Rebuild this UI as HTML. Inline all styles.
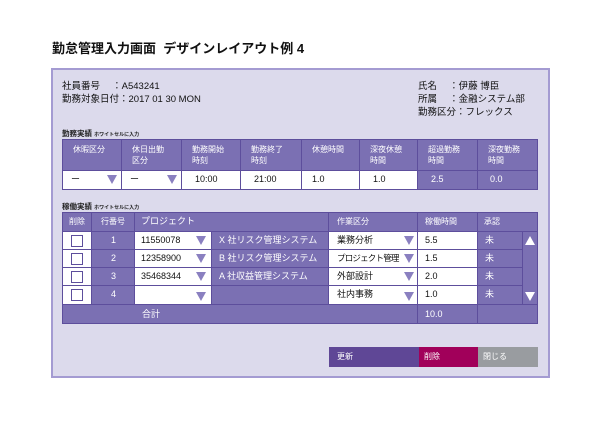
<!DOCTYPE html>
<html><head><meta charset="utf-8"><style>
*{margin:0;padding:0;box-sizing:border-box}
body{width:600px;height:425px;background:#fff;position:relative;font-family:"Liberation Sans","Noto Sans CJK JP",sans-serif;overflow:hidden}
div{position:absolute}
.t{font-size:9.5px;color:#111;white-space:nowrap}
.h{background:#7b70b3;color:#fff;font-size:8px;line-height:11px;border-right:1px solid #5d4e9c;border-bottom:1px solid #5d4e9c;padding-left:10px;padding-top:4px}
.w{background:#fff;border-right:1px solid #5d4e9c;border-bottom:1px solid #5d4e9c;font-size:9px;color:#111;line-height:17px;padding-left:8px;white-space:nowrap}
.p{background:#7b70b3;border-right:1px solid #5d4e9c;border-bottom:1px solid #5d4e9c;font-size:9px;color:#fff;line-height:17px;padding-left:8px;white-space:nowrap}
.a{width:0;height:0;border-left:5px solid transparent;border-right:5px solid transparent;border-top:9px solid #8a80c0;top:4px}
.cb{width:12px;height:12px;border:1px solid #5d4e9c;background:#fff;left:8px;top:3px}
</style></head><body>
<div style="left:52px;top:38px;font-size:13px;font-weight:bold;color:#111">勤怠管理入力画面&nbsp; デザインレイアウト例 4</div>
<div style="left:51px;top:68px;width:499px;height:310px;background:#dcdaec;border:2px solid #a49bd2"></div>
<div class="t" style="left:62px;top:80px;line-height:13px">社員番号　 ：A543241<br>勤務対象日付：2017 01 30 MON</div>
<div class="t" style="left:418px;top:80px;line-height:13px">氏名　 ：伊藤 博臣<br>所属　 ：金融システム部<br>勤務区分：フレックス</div>
<div style="left:62px;top:128px;font-size:7.5px;font-weight:bold;color:#222">勤務実績 <span style="font-size:5px">ホワイトセルに入力</span></div>
<div style="left:62px;top:139px;width:476px;height:51px;border-left:1px solid #5d4e9c;border-top:1px solid #5d4e9c;background:#5d4e9c"></div>
<div class="h" style="left:63px;top:140px;width:59px;height:31px">休暇区分</div>
<div class="h" style="left:122px;top:140px;width:60px;height:31px">休日出勤<br>区分</div>
<div class="h" style="left:182px;top:140px;width:59px;height:31px">勤務開始<br>時刻</div>
<div class="h" style="left:241px;top:140px;width:61px;height:31px">勤務終了<br>時刻</div>
<div class="h" style="left:302px;top:140px;width:58px;height:31px">休憩時間</div>
<div class="h" style="left:360px;top:140px;width:58px;height:31px">深夜休憩<br>時間</div>
<div class="h" style="left:418px;top:140px;width:60px;height:31px">超過勤務<br>時間</div>
<div class="h" style="left:478px;top:140px;width:60px;height:31px">深夜勤務<br>時間</div>
<div class="w" style="left:63px;top:171px;width:59px;height:19px">ー<div class="a" style="left:44px"></div></div>
<div class="w" style="left:122px;top:171px;width:60px;height:19px">ー<div class="a" style="left:45px"></div></div>
<div class="w" style="left:182px;top:171px;width:59px;height:19px;padding-left:13px">10:00</div>
<div class="w" style="left:241px;top:171px;width:61px;height:19px;padding-left:13px">21:00</div>
<div class="w" style="left:302px;top:171px;width:58px;height:19px;padding-left:10px">1.0</div>
<div class="w" style="left:360px;top:171px;width:58px;height:19px;padding-left:13px">1.0</div>
<div class="p" style="left:418px;top:171px;width:60px;height:19px;padding-left:13px">2.5</div>
<div class="p" style="left:478px;top:171px;width:60px;height:19px;padding-left:12px">0.0</div>

<div style="left:62px;top:201px;font-size:7.5px;font-weight:bold;color:#222">稼働実績 <span style="font-size:5px">ホワイトセルに入力</span></div>
<div style="left:62px;top:212px;width:476px;height:112px;border-left:1px solid #5d4e9c;border-top:1px solid #5d4e9c;background:#5d4e9c"></div>
<div class="h" style="left:63px;top:213px;width:29px;height:19px;padding-left:6px;padding-top:3px">削除</div>
<div class="h" style="left:92px;top:213px;width:43px;height:19px;padding-left:9px;padding-top:3px">行番号</div>
<div class="h" style="left:135px;top:213px;width:194px;height:19px;padding-left:6px;padding-top:3px;font-size:9px">プロジェクト</div>
<div class="h" style="left:329px;top:213px;width:89px;height:19px;padding-left:8px;padding-top:3px">作業区分</div>
<div class="h" style="left:418px;top:213px;width:60px;height:19px;padding-left:7px;padding-top:3px">稼働時間</div>
<div class="h" style="left:478px;top:213px;width:60px;height:19px;padding-left:6px;padding-top:3px">承認</div>

<div class="w" style="left:63px;top:232px;width:29px;height:18px"><div class="cb"></div></div>
<div class="p" style="left:92px;top:232px;width:43px;height:18px;padding-left:19px">1</div>
<div class="w" style="left:135px;top:232px;width:77px;height:18px;padding-left:6px">11550078<div class="a" style="left:61px"></div></div>
<div class="p" style="left:212px;top:232px;width:117px;height:18px;padding-left:7px">X 社リスク管理システム</div>
<div class="w" style="left:329px;top:232px;width:89px;height:18px;padding-left:8px">業務分析<div class="a" style="left:75px"></div></div>
<div class="w" style="left:418px;top:232px;width:60px;height:18px;padding-left:7px">5.5</div>
<div class="p" style="left:478px;top:232px;width:45px;height:18px;padding-left:7px">未</div>

<div class="w" style="left:63px;top:250px;width:29px;height:18px"><div class="cb"></div></div>
<div class="p" style="left:92px;top:250px;width:43px;height:18px;padding-left:19px">2</div>
<div class="w" style="left:135px;top:250px;width:77px;height:18px;padding-left:6px">12358900<div class="a" style="left:61px"></div></div>
<div class="p" style="left:212px;top:250px;width:117px;height:18px;padding-left:7px">B 社リスク管理システム</div>
<div class="w" style="left:329px;top:250px;width:89px;height:18px;padding-left:8px;letter-spacing:-0.8px;font-size:8.5px">プロジェクト管理<div class="a" style="left:75px"></div></div>
<div class="w" style="left:418px;top:250px;width:60px;height:18px;padding-left:7px">1.5</div>
<div class="p" style="left:478px;top:250px;width:45px;height:18px;padding-left:7px">未</div>

<div class="w" style="left:63px;top:268px;width:29px;height:18px"><div class="cb"></div></div>
<div class="p" style="left:92px;top:268px;width:43px;height:18px;padding-left:19px">3</div>
<div class="w" style="left:135px;top:268px;width:77px;height:18px;padding-left:6px">35468344<div class="a" style="left:61px"></div></div>
<div class="p" style="left:212px;top:268px;width:117px;height:18px;padding-left:7px">A 社収益管理システム</div>
<div class="w" style="left:329px;top:268px;width:89px;height:18px;padding-left:8px">外部設計<div class="a" style="left:75px"></div></div>
<div class="w" style="left:418px;top:268px;width:60px;height:18px;padding-left:7px">2.0</div>
<div class="p" style="left:478px;top:268px;width:45px;height:18px;padding-left:7px">未</div>

<div class="w" style="left:63px;top:286px;width:29px;height:19px"><div class="cb"></div></div>
<div class="p" style="left:92px;top:286px;width:43px;height:19px;padding-left:19px">4</div>
<div class="w" style="left:135px;top:286px;width:77px;height:19px"><div class="a" style="left:61px;top:6px"></div></div>
<div class="p" style="left:212px;top:286px;width:117px;height:19px"></div>
<div class="w" style="left:329px;top:286px;width:89px;height:19px;padding-left:8px">社内事務<div class="a" style="left:75px;top:6px"></div></div>
<div class="w" style="left:418px;top:286px;width:60px;height:19px;padding-left:7px">1.0</div>
<div class="p" style="left:478px;top:286px;width:45px;height:19px;padding-left:7px">未</div>

<div class="p" style="left:523px;top:232px;width:15px;height:73px"></div>
<div style="left:525px;top:236px;width:0;height:0;border-left:5px solid transparent;border-right:5px solid transparent;border-bottom:9px solid #fff"></div>
<div style="left:525px;top:292px;width:0;height:0;border-left:5px solid transparent;border-right:5px solid transparent;border-top:9px solid #fff"></div>

<div class="p" style="left:63px;top:305px;width:355px;height:19px;padding-left:79px;line-height:18px">合計</div>
<div class="p" style="left:418px;top:305px;width:60px;height:19px;padding-left:7px;line-height:18px">10.0</div>
<div class="p" style="left:478px;top:305px;width:60px;height:19px"></div>

<div style="left:329px;top:347px;width:90px;height:20px;background:#5f4796;color:#fff;font-size:8px;line-height:20px;padding-left:8px">更新</div>
<div style="left:419px;top:347px;width:59px;height:20px;background:#a1005a;color:#fff;font-size:8px;line-height:20px;padding-left:5px">削除</div>
<div style="left:478px;top:347px;width:60px;height:20px;background:#999ca0;color:#fff;font-size:8px;line-height:20px;padding-left:5px">閉じる</div>
</body></html>
